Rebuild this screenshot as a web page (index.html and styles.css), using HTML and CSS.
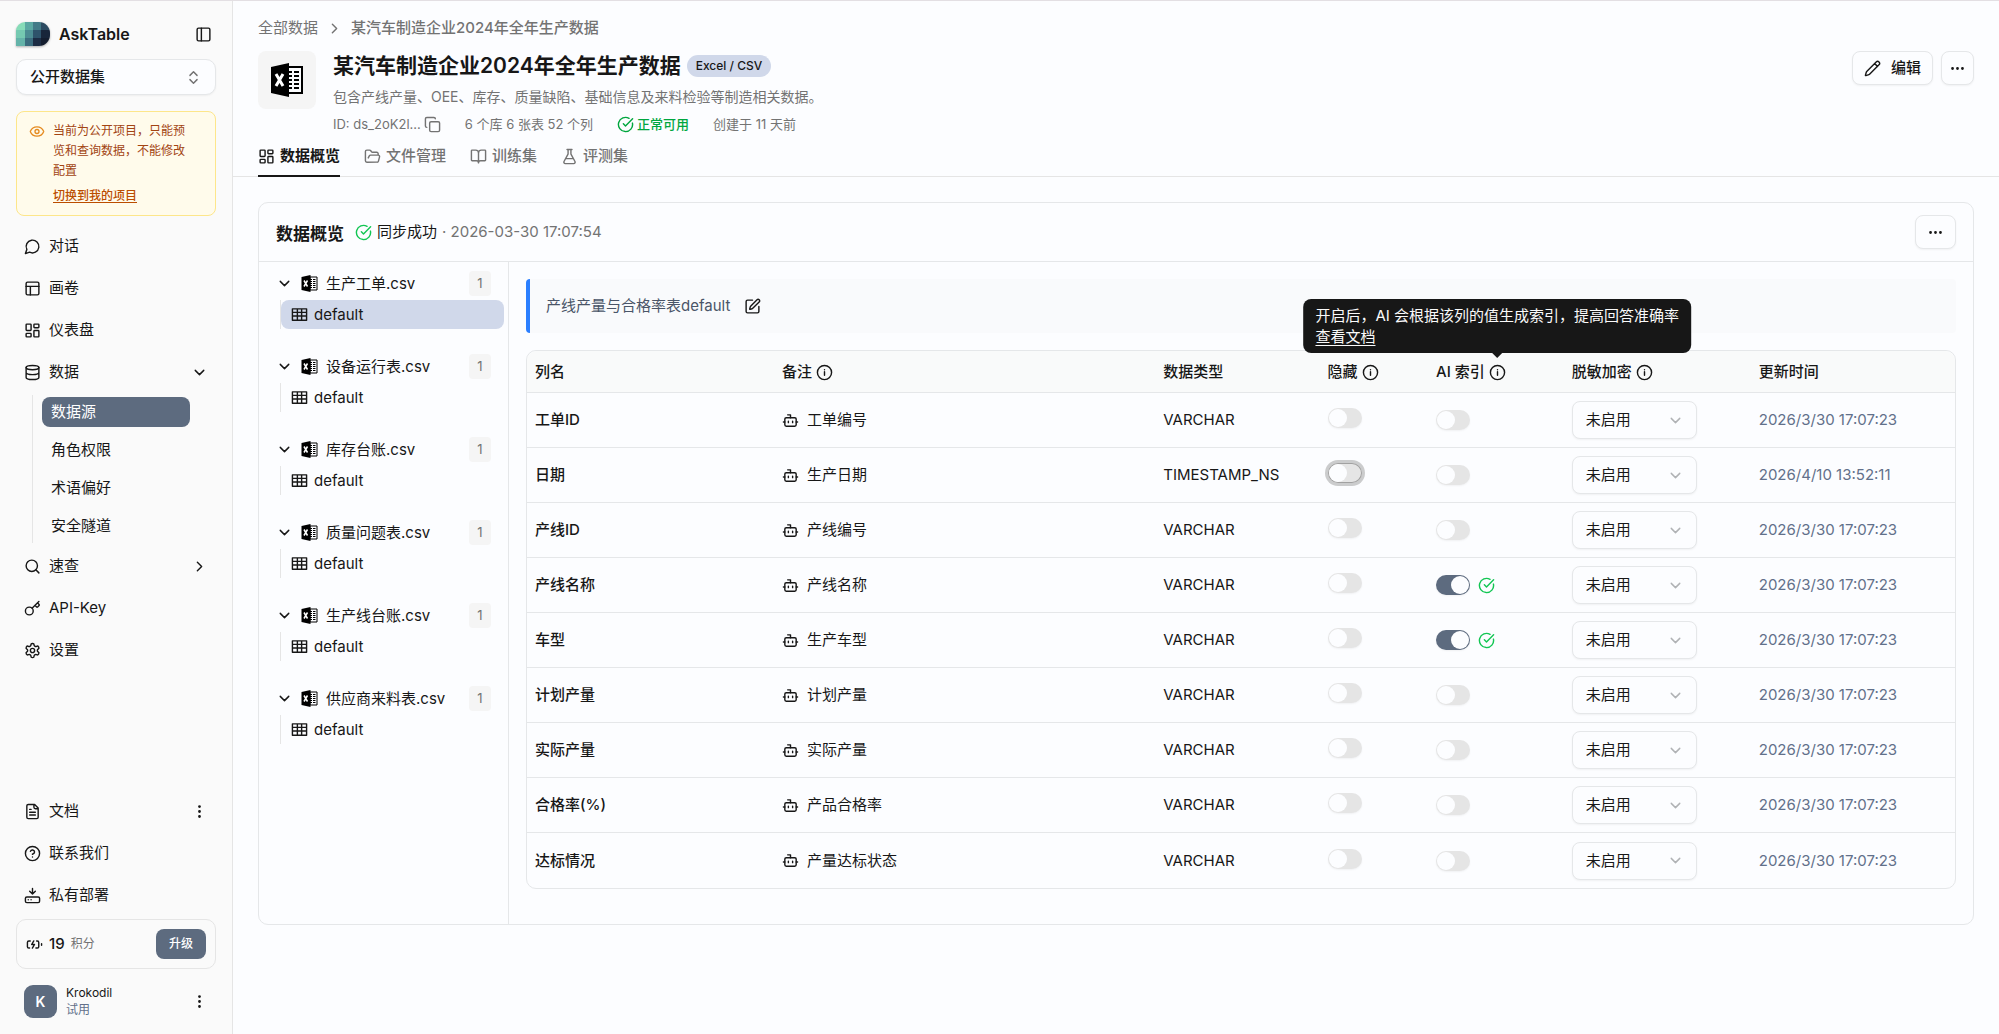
FILE: index.html
```html
<!DOCTYPE html>
<html lang="zh-CN">
<head>
  <meta charset="UTF-8" />
  <meta name="viewport" content="width=device-width, initial-scale=1.0"/>
  <title>AskTable</title>
  <link rel="stylesheet" href="styles.css">
</head>
<body>

  <!-- Icon sprite -->
  <svg class="sprite" aria-hidden="true">
    <symbol id="i-panel" viewBox="0 0 24 24"><rect x="3" y="3" width="18" height="18" rx="2"/><path d="M9 3v18"/></symbol>
    <symbol id="i-updown" viewBox="0 0 24 24"><path d="m7 15 5 5 5-5M7 9l5-5 5 5"/></symbol>
    <symbol id="i-eye" viewBox="0 0 24 24"><path d="M2.06 12.35a1 1 0 0 1 0-.7 10.75 10.75 0 0 1 19.88 0 1 1 0 0 1 0 .7 10.75 10.75 0 0 1-19.88 0"/><circle cx="12" cy="12" r="3"/></symbol>
    <symbol id="i-chat" viewBox="0 0 24 24"><path d="M7.9 20A9 9 0 1 0 4 16.1L2 22Z"/></symbol>
    <symbol id="i-canvas" viewBox="0 0 24 24"><rect x="3" y="3" width="18" height="18" rx="2"/><path d="M3 9h18M9 21V9"/></symbol>
    <symbol id="i-dashboard" viewBox="0 0 24 24"><rect x="3" y="3" width="7" height="9" rx="1"/><rect x="14" y="3" width="7" height="5" rx="1"/><rect x="14" y="12" width="7" height="9" rx="1"/><rect x="3" y="16" width="7" height="5" rx="1"/></symbol>
    <symbol id="i-database" viewBox="0 0 24 24"><ellipse cx="12" cy="5" rx="9" ry="3"/><path d="M3 5v14a9 3 0 0 0 18 0V5M3 12a9 3 0 0 0 18 0"/></symbol>
    <symbol id="i-down" viewBox="0 0 24 24"><path d="m6 9 6 6 6-6"/></symbol>
    <symbol id="i-right" viewBox="0 0 24 24"><path d="m9 18 6-6-6-6"/></symbol>
    <symbol id="i-search" viewBox="0 0 24 24"><circle cx="11" cy="11" r="8"/><path d="m21 21-4.3-4.3"/></symbol>
    <symbol id="i-key" viewBox="0 0 24 24"><path d="m15.5 7.5 2.3 2.3a1 1 0 0 0 1.4 0l2.1-2.1a1 1 0 0 0 0-1.4L19 4M21 2l-9.6 9.6"/><circle cx="7.5" cy="15.5" r="5.5"/></symbol>
    <symbol id="i-settings" viewBox="0 0 24 24"><path d="M12.22 2h-.44a2 2 0 0 0-2 2v.18a2 2 0 0 1-1 1.73l-.43.25a2 2 0 0 1-2 0l-.15-.08a2 2 0 0 0-2.73.73l-.22.38a2 2 0 0 0 .73 2.73l.15.1a2 2 0 0 1 1 1.72v.51a2 2 0 0 1-1 1.74l-.15.09a2 2 0 0 0-.73 2.73l.22.38a2 2 0 0 0 2.73.73l.15-.08a2 2 0 0 1 2 0l.43.25a2 2 0 0 1 1 1.73V20a2 2 0 0 0 2 2h.44a2 2 0 0 0 2-2v-.18a2 2 0 0 1 1-1.73l.43-.25a2 2 0 0 1 2 0l.15.08a2 2 0 0 0 2.73-.73l.22-.39a2 2 0 0 0-.73-2.73l-.15-.08a2 2 0 0 1-1-1.74v-.5a2 2 0 0 1 1-1.74l.15-.09a2 2 0 0 0 .73-2.73l-.22-.38a2 2 0 0 0-2.73-.73l-.15.08a2 2 0 0 1-2 0l-.43-.25a2 2 0 0 1-1-1.73V4a2 2 0 0 0-2-2z"/><circle cx="12" cy="12" r="3"/></symbol>
    <symbol id="i-file" viewBox="0 0 24 24"><path d="M15 2H6a2 2 0 0 0-2 2v16a2 2 0 0 0 2 2h12a2 2 0 0 0 2-2V7ZM14 2v4a2 2 0 0 0 2 2h4M10 9H8M16 13H8M16 17H8"/></symbol>
    <symbol id="i-help" viewBox="0 0 24 24"><circle cx="12" cy="12" r="10"/><path d="M9.09 9a3 3 0 0 1 5.83 1c0 2-3 3-3 3M12 17h.01"/></symbol>
    <symbol id="i-deploy" viewBox="0 0 24 24"><path d="M12 2v8M16 6l-4 4-4-4M6 18h.01M10 18h.01"/><rect x="2" y="14" width="20" height="8" rx="2"/></symbol>
    <symbol id="i-battery" viewBox="0 0 24 24"><path d="M15 7h1a2 2 0 0 1 2 2v6a2 2 0 0 1-2 2h-2M6 7H4a2 2 0 0 0-2 2v6a2 2 0 0 0 2 2h1M11 7l-3 5h4l-3 5M22 11v2"/></symbol>
    <symbol id="i-more-v" viewBox="0 0 24 24"><circle cx="12" cy="5" r="1"/><circle cx="12" cy="12" r="1"/><circle cx="12" cy="19" r="1"/></symbol>
    <symbol id="i-more-h" viewBox="0 0 24 24"><circle cx="5" cy="12" r="1"/><circle cx="12" cy="12" r="1"/><circle cx="19" cy="12" r="1"/></symbol>
    <symbol id="i-copy" viewBox="0 0 24 24"><rect x="8" y="8" width="14" height="14" rx="2"/><path d="M4 16c-1.1 0-2-.9-2-2V4c0-1.1.9-2 2-2h10c1.1 0 2 .9 2 2"/></symbol>
    <symbol id="i-check" viewBox="0 0 24 24"><path d="M21.8 10A10 10 0 1 1 17 3.34M9 11l3 3L22 4"/></symbol>
    <symbol id="i-folder" viewBox="0 0 24 24"><path d="m6 14 1.5-2.9A2 2 0 0 1 9.24 10H20a2 2 0 0 1 1.94 2.5l-1.54 6a2 2 0 0 1-1.95 1.5H4a2 2 0 0 1-2-2V5a2 2 0 0 1 2-2h3.9a2 2 0 0 1 1.69.9l.81 1.2a2 2 0 0 0 1.67.9H18a2 2 0 0 1 2 2v2"/></symbol>
    <symbol id="i-book" viewBox="0 0 24 24"><path d="M12 7v14M3 18a1 1 0 0 1-1-1V4a1 1 0 0 1 1-1h5a4 4 0 0 1 4 4 4 4 0 0 1 4-4h5a1 1 0 0 1 1 1v13a1 1 0 0 1-1 1h-6a3 3 0 0 0-3 3 3 3 0 0 0-3-3z"/></symbol>
    <symbol id="i-flask" viewBox="0 0 24 24"><path d="M14 2v6a2 2 0 0 0 .25.96l5.5 10.08A2 2 0 0 1 18 22H6a2 2 0 0 1-1.76-2.96l5.51-10.08A2 2 0 0 0 10 8V2M6.45 15h11.1M8.5 2h7"/></symbol>
    <symbol id="i-pencil" viewBox="0 0 24 24"><path d="M21.17 6.81a1 1 0 0 0-3.98-3.98L3.84 16.17a2 2 0 0 0-.5.83l-1.32 4.36a.5.5 0 0 0 .62.62l4.36-1.32a2 2 0 0 0 .83-.5zM15 5l4 4"/></symbol>
    <symbol id="i-edit" viewBox="0 0 24 24"><path d="M12 3H5a2 2 0 0 0-2 2v14a2 2 0 0 0 2 2h14a2 2 0 0 0 2-2v-7M18.38 2.63a1 1 0 0 1 3 3l-9.02 9.01a2 2 0 0 1-.85.5l-2.87.84a.5.5 0 0 1-.62-.62l.84-2.87a2 2 0 0 1 .5-.85z"/></symbol>
    <symbol id="i-bot" viewBox="0 0 24 24"><path d="M12 8V4H8M2 14h2M20 14h2M15 13v2M9 13v2"/><rect x="4" y="8" width="16" height="12" rx="2"/></symbol>
    <symbol id="i-info" viewBox="0 0 24 24"><circle cx="12" cy="12" r="10"/><path d="M12 16v-5M12 8h.01"/></symbol>
    <symbol id="i-table" viewBox="0 0 24 24"><path d="M2 4h20v16H2zM2 9h20M2 14h20M9 4v16M15 4v16"/></symbol>
    <symbol id="i-excel" viewBox="0 0 34 34">
      <path d="M18 4h14v26H18z" fill="#fcfdff" stroke="#000" stroke-width="2"/>
      <path d="M18 9h4M24 9h5M18 13h4M24 13h5M18 17h4M24 17h5M18 21h4M24 21h5M18 25h4M24 25h5" stroke="#000" stroke-width="2"/>
      <path d="M1 4 19 0v34L1 30z" fill="#000" stroke="none"/>
      <path d="m6 11 7 12M13 11 6 23" stroke="#fff" stroke-width="3" stroke-linecap="butt"/>
    </symbol>
  </svg>

  <aside class="sidebar">
    <div class="brand">
      <svg class="logo" viewBox="0 0 34 24">
        <clipPath id="logoShape"><path d="M9 0h14a11 11 0 0 1 11 11v2a11 11 0 0 1-11 11H0V9a9 9 0 0 1 9-9z"/></clipPath>
        <g clip-path="url(#logoShape)">
          <path fill="#86dcb8" d="M0 0h9v8H0z"/><path fill="#5aa8a2" d="M9 0h8v8H9z"/><path fill="#427a87" d="M17 0h8v8h-8z"/><path fill="#2c4b62" d="M25 0h9v8h-9z"/>
          <path fill="#75c9b1" d="M0 8h9v8H0z"/><path fill="#4b8c92" d="M9 8h8v8H9z"/><path fill="#2e536b" d="M17 8h8v8h-8z"/><path fill="#18253a" d="M25 8h9v8h-9z"/>
          <path fill="#64b3a9" d="M0 16h9v8H0z"/><path fill="#3b6c7e" d="M9 16h8v8H9z"/><path fill="#1c2c44" d="M17 16h8v8h-8z"/><path fill="#141d2f" d="M25 16h9v8h-9z"/>
        </g>
      </svg>
      <strong>AskTable</strong>
      <button class="icon-btn" aria-label="收起侧边栏"><svg class="icon"><use href="#i-panel"/></svg></button>
    </div>

    <button class="project">公开数据集<svg class="icon"><use href="#i-updown"/></svg></button>

    <div class="notice">
      <svg class="icon"><use href="#i-eye"/></svg>
      <div>
        <p>当前为公开项目，只能预览和查询数据，不能修改配置</p>
        <a href="#">切换到我的项目</a>
      </div>
    </div>

    <nav class="nav">
      <a href="#"><svg class="icon"><use href="#i-chat"/></svg>对话</a>
      <a href="#"><svg class="icon"><use href="#i-canvas"/></svg>画卷</a>
      <a href="#"><svg class="icon"><use href="#i-dashboard"/></svg>仪表盘</a>
      <a href="#"><svg class="icon"><use href="#i-database"/></svg>数据<svg class="icon end"><use href="#i-down"/></svg></a>
      <div class="subnav">
        <a href="#" class="active">数据源</a>
        <a href="#">角色权限</a>
        <a href="#">术语偏好</a>
        <a href="#">安全隧道</a>
      </div>
      <a href="#"><svg class="icon"><use href="#i-search"/></svg>速查<svg class="icon end"><use href="#i-right"/></svg></a>
      <a href="#"><svg class="icon"><use href="#i-key"/></svg>API-Key</a>
      <a href="#"><svg class="icon"><use href="#i-settings"/></svg>设置</a>
    </nav>

    <nav class="nav nav-bottom">
      <a href="#"><svg class="icon"><use href="#i-file"/></svg>文档<svg class="icon end"><use href="#i-more-v"/></svg></a>
      <a href="#"><svg class="icon"><use href="#i-help"/></svg>联系我们</a>
      <a href="#"><svg class="icon"><use href="#i-deploy"/></svg>私有部署</a>
    </nav>

    <div class="credits">
      <svg class="icon"><use href="#i-battery"/></svg>
      <b>19</b>
      <span>积分</span>
      <button>升级</button>
    </div>

    <div class="user">
      <span class="avatar">K</span>
      <div>
        <p>Krokodil</p>
        <small>试用</small>
      </div>
      <button class="icon-btn" aria-label="更多"><svg class="icon"><use href="#i-more-v"/></svg></button>
    </div>
  </aside>

  <main class="main">
    <header class="header">
      <div class="breadcrumb">
        <a href="#">全部数据</a>
        <svg class="icon"><use href="#i-right"/></svg>
        <span>某汽车制造企业2024年全年生产数据</span>
      </div>

      <div class="source">
        <div class="source-icon"><svg><use href="#i-excel"/></svg></div>
        <div class="source-info">
          <div class="source-title">
            <h1>某汽车制造企业2024年全年生产数据</h1>
            <span class="tag">Excel / CSV</span>
          </div>
          <p class="desc">包含产线产量、OEE、库存、质量缺陷、基础信息及来料检验等制造相关数据。</p>
          <div class="meta">
            <span class="meta-id">ID: ds_2oK2l...<svg class="icon"><use href="#i-copy"/></svg></span>
            <span>6 个库 6 张表 52 个列</span>
            <span class="ok"><svg class="icon"><use href="#i-check"/></svg>正常可用</span>
            <span>创建于 11 天前</span>
          </div>
        </div>
        <div class="actions">
          <button class="btn"><svg class="icon"><use href="#i-pencil"/></svg>编辑</button>
          <button class="btn btn-square" aria-label="更多"><svg class="icon"><use href="#i-more-h"/></svg></button>
        </div>
      </div>

      <nav class="tabs">
        <a href="#" class="active"><svg class="icon"><use href="#i-dashboard"/></svg>数据概览</a>
        <a href="#"><svg class="icon"><use href="#i-folder"/></svg>文件管理</a>
        <a href="#"><svg class="icon"><use href="#i-book"/></svg>训练集</a>
        <a href="#"><svg class="icon"><use href="#i-flask"/></svg>评测集</a>
      </nav>
    </header>

    <section class="panel">
      <div class="panel-header">
        <div class="panel-title">
          <h2>数据概览</h2>
          <span class="sync"><svg class="icon green"><use href="#i-check"/></svg>同步成功 <span class="muted">· 2026-03-30 17:07:54</span></span>
        </div>
        <button class="btn btn-wide" aria-label="更多"><svg class="icon"><use href="#i-more-h"/></svg></button>
      </div>

      <div class="panel-body">
        <ul class="tree">
          <li>
            <div class="file"><svg class="icon"><use href="#i-down"/></svg><svg class="xls"><use href="#i-excel"/></svg>生产工单.csv<span class="count">1</span></div>
            <div class="children"><a href="#" class="active"><svg class="icon"><use href="#i-table"/></svg>default</a></div>
          </li>
          <li>
            <div class="file"><svg class="icon"><use href="#i-down"/></svg><svg class="xls"><use href="#i-excel"/></svg>设备运行表.csv<span class="count">1</span></div>
            <div class="children"><a href="#"><svg class="icon"><use href="#i-table"/></svg>default</a></div>
          </li>
          <li>
            <div class="file"><svg class="icon"><use href="#i-down"/></svg><svg class="xls"><use href="#i-excel"/></svg>库存台账.csv<span class="count">1</span></div>
            <div class="children"><a href="#"><svg class="icon"><use href="#i-table"/></svg>default</a></div>
          </li>
          <li>
            <div class="file"><svg class="icon"><use href="#i-down"/></svg><svg class="xls"><use href="#i-excel"/></svg>质量问题表.csv<span class="count">1</span></div>
            <div class="children"><a href="#"><svg class="icon"><use href="#i-table"/></svg>default</a></div>
          </li>
          <li>
            <div class="file"><svg class="icon"><use href="#i-down"/></svg><svg class="xls"><use href="#i-excel"/></svg>生产线台账.csv<span class="count">1</span></div>
            <div class="children"><a href="#"><svg class="icon"><use href="#i-table"/></svg>default</a></div>
          </li>
          <li>
            <div class="file"><svg class="icon"><use href="#i-down"/></svg><svg class="xls"><use href="#i-excel"/></svg>供应商来料表.csv<span class="count">1</span></div>
            <div class="children"><a href="#"><svg class="icon"><use href="#i-table"/></svg>default</a></div>
          </li>
        </ul>

        <div class="content">
          <div class="remark">
            产线产量与合格率表default
            <button class="icon-btn" aria-label="编辑备注"><svg class="icon"><use href="#i-edit"/></svg></button>
          </div>

          <table class="columns">
            <thead>
              <tr>
                <th class="c-name">列名</th>
                <th class="c-note">备注 <span class="info"><svg class="icon"><use href="#i-info"/></svg></span></th>
                <th class="c-type">数据类型</th>
                <th class="c-hide">隐藏 <span class="info"><svg class="icon"><use href="#i-info"/></svg></span></th>
                <th class="c-index">AI 索引 <span class="info"><svg class="icon"><use href="#i-info"/></svg><span class="tooltip" role="tooltip">开启后，AI 会根据该列的值生成索引，提高回答准确率<br><a href="#">查看文档</a></span></span></th>
                <th class="c-mask">脱敏加密 <span class="info"><svg class="icon"><use href="#i-info"/></svg></span></th>
                <th class="c-time">更新时间</th>
              </tr>
            </thead>
            <tbody>
              <tr>
                <td class="name">工单ID</td>
                <td><span class="cell"><svg class="icon"><use href="#i-bot"/></svg>工单编号</span></td>
                <td>VARCHAR</td>
                <td class="hide"><input type="checkbox" class="switch" aria-label="隐藏 工单ID"></td>
                <td><span class="cell"><input type="checkbox" class="switch" aria-label="AI 索引 工单ID"></span></td>
                <td><span class="select"><select aria-label="脱敏加密 工单ID"><option>未启用</option></select><svg class="icon"><use href="#i-down"/></svg></span></td>
                <td class="time">2026/3/30 17:07:23</td>
              </tr>
              <tr>
                <td class="name">日期</td>
                <td><span class="cell"><svg class="icon"><use href="#i-bot"/></svg>生产日期</span></td>
                <td>TIMESTAMP_NS</td>
                <td class="hide"><input type="checkbox" class="switch focused" aria-label="隐藏 日期"></td>
                <td><span class="cell"><input type="checkbox" class="switch" aria-label="AI 索引 日期"></span></td>
                <td><span class="select"><select aria-label="脱敏加密 日期"><option>未启用</option></select><svg class="icon"><use href="#i-down"/></svg></span></td>
                <td class="time">2026/4/10 13:52:11</td>
              </tr>
              <tr>
                <td class="name">产线ID</td>
                <td><span class="cell"><svg class="icon"><use href="#i-bot"/></svg>产线编号</span></td>
                <td>VARCHAR</td>
                <td class="hide"><input type="checkbox" class="switch" aria-label="隐藏 产线ID"></td>
                <td><span class="cell"><input type="checkbox" class="switch" aria-label="AI 索引 产线ID"></span></td>
                <td><span class="select"><select aria-label="脱敏加密 产线ID"><option>未启用</option></select><svg class="icon"><use href="#i-down"/></svg></span></td>
                <td class="time">2026/3/30 17:07:23</td>
              </tr>
              <tr>
                <td class="name">产线名称</td>
                <td><span class="cell"><svg class="icon"><use href="#i-bot"/></svg>产线名称</span></td>
                <td>VARCHAR</td>
                <td class="hide"><input type="checkbox" class="switch" aria-label="隐藏 产线名称"></td>
                <td><span class="cell"><input type="checkbox" class="switch" aria-label="AI 索引 产线名称" checked><svg class="icon green"><use href="#i-check"/></svg></span></td>
                <td><span class="select"><select aria-label="脱敏加密 产线名称"><option>未启用</option></select><svg class="icon"><use href="#i-down"/></svg></span></td>
                <td class="time">2026/3/30 17:07:23</td>
              </tr>
              <tr>
                <td class="name">车型</td>
                <td><span class="cell"><svg class="icon"><use href="#i-bot"/></svg>生产车型</span></td>
                <td>VARCHAR</td>
                <td class="hide"><input type="checkbox" class="switch" aria-label="隐藏 车型"></td>
                <td><span class="cell"><input type="checkbox" class="switch" aria-label="AI 索引 车型" checked><svg class="icon green"><use href="#i-check"/></svg></span></td>
                <td><span class="select"><select aria-label="脱敏加密 车型"><option>未启用</option></select><svg class="icon"><use href="#i-down"/></svg></span></td>
                <td class="time">2026/3/30 17:07:23</td>
              </tr>
              <tr>
                <td class="name">计划产量</td>
                <td><span class="cell"><svg class="icon"><use href="#i-bot"/></svg>计划产量</span></td>
                <td>VARCHAR</td>
                <td class="hide"><input type="checkbox" class="switch" aria-label="隐藏 计划产量"></td>
                <td><span class="cell"><input type="checkbox" class="switch" aria-label="AI 索引 计划产量"></span></td>
                <td><span class="select"><select aria-label="脱敏加密 计划产量"><option>未启用</option></select><svg class="icon"><use href="#i-down"/></svg></span></td>
                <td class="time">2026/3/30 17:07:23</td>
              </tr>
              <tr>
                <td class="name">实际产量</td>
                <td><span class="cell"><svg class="icon"><use href="#i-bot"/></svg>实际产量</span></td>
                <td>VARCHAR</td>
                <td class="hide"><input type="checkbox" class="switch" aria-label="隐藏 实际产量"></td>
                <td><span class="cell"><input type="checkbox" class="switch" aria-label="AI 索引 实际产量"></span></td>
                <td><span class="select"><select aria-label="脱敏加密 实际产量"><option>未启用</option></select><svg class="icon"><use href="#i-down"/></svg></span></td>
                <td class="time">2026/3/30 17:07:23</td>
              </tr>
              <tr>
                <td class="name">合格率(%)</td>
                <td><span class="cell"><svg class="icon"><use href="#i-bot"/></svg>产品合格率</span></td>
                <td>VARCHAR</td>
                <td class="hide"><input type="checkbox" class="switch" aria-label="隐藏 合格率"></td>
                <td><span class="cell"><input type="checkbox" class="switch" aria-label="AI 索引 合格率"></span></td>
                <td><span class="select"><select aria-label="脱敏加密 合格率"><option>未启用</option></select><svg class="icon"><use href="#i-down"/></svg></span></td>
                <td class="time">2026/3/30 17:07:23</td>
              </tr>
              <tr>
                <td class="name">达标情况</td>
                <td><span class="cell"><svg class="icon"><use href="#i-bot"/></svg>产量达标状态</span></td>
                <td>VARCHAR</td>
                <td class="hide"><input type="checkbox" class="switch" aria-label="隐藏 达标情况"></td>
                <td><span class="cell"><input type="checkbox" class="switch" aria-label="AI 索引 达标情况"></span></td>
                <td><span class="select"><select aria-label="脱敏加密 达标情况"><option>未启用</option></select><svg class="icon"><use href="#i-down"/></svg></span></td>
                <td class="time">2026/3/30 17:07:23</td>
              </tr>
            </tbody>
          </table>
        </div>
      </div>
    </section>
  </main>

</body>
</html>
```
FILE: styles.css
```css
* {
  box-sizing: border-box;
}
body {
  margin: 0;
  min-height: 100vh;
  display: flex;
  border-top: 1px solid #e3dfe3;
  background: #fcfdff;
  color: #171717;
  font-family: Inter, "Noto Sans CJK SC", sans-serif;
  font-size: 15px;
  line-height: 22px;
}
h1, h2, p, ul {
  margin: 0;
  padding: 0;
}
a {
  color: inherit;
  text-decoration: none;
}
button, select {
  font: inherit;
  color: inherit;
  cursor: pointer;
}
.sprite {
  display: none;
}
.icon {
  width: 17px;
  height: 17px;
  flex: none;
  fill: none;
  stroke: currentColor;
  stroke-width: 2;
  stroke-linecap: round;
  stroke-linejoin: round;
}
.green {
  color: #12c653;
}
.muted {
  color: #737373;
}
.icon-btn {
  display: flex;
  padding: 0;
  border: none;
  background: none;
}

/* Sidebar */
.sidebar {
  width: 233px;
  flex: none;
  display: flex;
  flex-direction: column;
  padding: 16px;
  border-right: 1px solid #e5e5e5;
  background: #fafafa;
}
.brand {
  display: flex;
  align-items: center;
  height: 34px;
}
.brand strong {
  margin-left: 9px;
  font-size: 16px;
  font-weight: 600;
}
.brand .icon-btn {
  margin-left: auto;
  margin-right: 4px;
}
.logo {
  width: 34px;
  height: 24px;
  filter: drop-shadow(0 1px 1px rgba(0,0,0,0.3));
}
.project {
  display: flex;
  align-items: center;
  justify-content: space-between;
  height: 36px;
  margin-top: 8px;
  padding: 0 13px;
  border: 1px solid #e5e7e9;
  border-radius: 10px;
  background: #fcfdff;
  box-shadow: 0 1px 2px rgba(0,0,0,0.05);
  font-weight: 500;
}
.project .icon {
  color: #737373;
}
.notice {
  display: flex;
  gap: 8px;
  margin-top: 16px;
  padding: 9px 22px 9px 12px;
  border: 1px solid #fde68a;
  border-radius: 8px;
  background: #fffbeb;
  color: #a24412;
  font-size: 12px;
  line-height: 20px;
}
.notice .icon {
  width: 16px;
  margin-top: 2px;
  color: #e58a1f;
}
.notice a {
  display: inline-block;
  margin-top: 5px;
  color: #bb4d00;
  font-weight: 500;
  text-decoration: underline;
  text-underline-offset: 2px;
}
.nav {
  display: flex;
  flex-direction: column;
  margin-top: 9px;
}
.nav > a {
  display: flex;
  align-items: center;
  gap: 8px;
  height: 42px;
  padding: 0 8px;
}
.nav .end {
  margin-left: auto;
}
.subnav {
  display: flex;
  flex-direction: column;
  gap: 8px;
  margin: 2px 26px 2px 16px;
  padding: 2px 0 2px 9px;
  border-left: 1px solid #e5e5e5;
}
.subnav a {
  padding: 4px 9px;
  border-radius: 8px;
}
.subnav .active {
  background: #5d6b7f;
  color: #fff;
}
.nav-bottom {
  margin-top: auto;
}
.credits {
  display: flex;
  align-items: center;
  margin-top: 3px;
  padding: 9px;
  border: 1px solid #e5e5e5;
  border-radius: 10px;
}
.credits b {
  margin: 0 6px;
  font-weight: 500;
}
.credits span {
  color: #737373;
  font-size: 12px;
}
.credits button {
  margin-left: auto;
  padding: 4px 13px;
  border: none;
  border-radius: 8px;
  background: #5d6b7f;
  color: #fff;
  font-size: 12px;
  font-weight: 500;
}
.user {
  display: flex;
  align-items: center;
  gap: 9px;
  margin-top: 15px;
  padding: 0 8px;
}
.user p, .user small {
  display: block;
  font-size: 12px;
  line-height: 17px;
}
.user small {
  color: #62708a;
}
.user .icon-btn {
  margin-left: auto;
}
.avatar {
  width: 33px;
  height: 33px;
  border-radius: 9px;
  background: #5d6b7f;
  color: #fff;
  font-size: 14px;
  font-weight: 600;
  line-height: 33px;
  text-align: center;
}

/* Page header */
.main {
  flex: 1;
  min-width: 0;
}
.header {
  padding: 16px 25px 0;
  border-bottom: 1px solid #e5e5e5;
}
.breadcrumb {
  display: flex;
  align-items: center;
  gap: 8px;
  color: #737373;
}
.breadcrumb span {
  font-weight: 500;
}
.source {
  display: flex;
  margin-top: 12px;
}
.source-icon {
  width: 58px;
  height: 58px;
  padding: 12px;
  border-radius: 8px;
  background: #f5f5f5;
}
.source-icon svg {
  display: block;
  width: 34px;
  height: 34px;
}
.source-info {
  margin-left: 17px;
}
.source-title {
  display: flex;
  align-items: center;
  gap: 6px;
  height: 30px;
}
.source-title h1 {
  font-size: 21px;
  font-weight: 600;
}
.tag {
  padding: 0 9px;
  border-radius: 12px;
  background: #d0d8ea;
  font-size: 12px;
  font-weight: 500;
}
.desc {
  margin-top: 5px;
  color: #737373;
  font-size: 14px;
}
.meta {
  display: flex;
  align-items: center;
  gap: 24px;
  margin-top: 7px;
  color: #737373;
  font-size: 13px;
  line-height: 18px;
}
.meta span {
  display: flex;
  align-items: center;
  gap: 3px;
}
.meta .ok {
  color: #00a63e;
  font-weight: 500;
}
.actions {
  display: flex;
  gap: 8px;
  margin-left: auto;
}
.btn {
  display: flex;
  align-items: center;
  gap: 10px;
  height: 34px;
  padding: 0 11px;
  border: 1px solid #e5e7e9;
  border-radius: 8px;
  background: #fcfdff;
  box-shadow: 0 1px 2px rgba(0,0,0,0.05);
  font-weight: 500;
}
.btn-square {
  padding: 0 7px;
}
.tabs {
  display: flex;
  gap: 24px;
  margin-bottom: -1px;
}
.tabs a {
  display: flex;
  align-items: center;
  gap: 5px;
  padding: 12px 0 8px;
  border-bottom: 2px solid transparent;
  color: #737373;
  font-weight: 500;
}
.tabs .active {
  border-color: #171717;
  color: #171717;
  font-weight: 600;
}

/* Overview panel */
.panel {
  margin: 25px;
  border: 1px solid #e5e7e9;
  border-radius: 10px;
}
.panel-header {
  display: flex;
  align-items: center;
  justify-content: space-between;
  padding: 12px 17px;
  border-bottom: 1px solid #e5e7e9;
}
.panel-title {
  display: flex;
  gap: 11px;
}
.panel-title h2 {
  padding-top: 4px;
  font-size: 17px;
  font-weight: 600;
  line-height: 30px;
}
.sync {
  display: flex;
  align-items: center;
  gap: 5px;
}
.btn-wide {
  padding: 0 11px;
}
.panel-body {
  display: flex;
}
.tree {
  width: 250px;
  flex: none;
  padding: 9px 4px 9px 17px;
  border-right: 1px solid #e5e7e9;
  list-style: none;
}
.tree li {
  margin-bottom: 25px;
}
.file {
  display: flex;
  align-items: center;
  gap: 8px;
  height: 25px;
  padding-right: 13px;
}
.xls {
  width: 17px;
  height: 17px;
}
.count {
  width: 22px;
  margin-left: auto;
  border-radius: 4px;
  background: #f5f5f5;
  color: #737373;
  font-size: 13px;
  line-height: 25px;
  text-align: center;
}
.children {
  margin: 4px 0 0 4px;
  border-left: 1px solid #e5e5e5;
}
.children a {
  display: flex;
  align-items: center;
  gap: 6px;
  height: 29px;
  padding: 0 10px;
  border-radius: 8px;
}
.children .active {
  background: #d0d8ea;
}
.content {
  flex: 1;
  min-width: 0;
  padding: 17px 17px 35px;
}
.remark {
  display: flex;
  align-items: center;
  gap: 14px;
  padding: 16px;
  border-left: 4px solid #2b7fff;
  border-radius: 4px;
  background: #f9fafc;
  color: #4a5568;
}
.remark .icon {
  color: #171717;
}
.columns {
  width: 100%;
  margin-top: 17px;
  table-layout: fixed;
  border: 1px solid #e5e7e9;
  border-radius: 10px;
  border-spacing: 0;
}
.columns th, .columns td {
  padding: 0 8px;
  text-align: left;
  white-space: nowrap;
}
.columns th {
  height: 42px;
  border-bottom: 1px solid #e5e7e9;
  background: #f9fafa;
  font-weight: 500;
}
.columns th:first-child {
  border-top-left-radius: 10px;
}
.columns th:last-child {
  border-top-right-radius: 10px;
}
.columns td {
  height: 55px;
  border-bottom: 1px solid #e5e7e9;
}
.columns tr:last-child td {
  border-bottom: none;
}
.c-name { width: 17.3%; }
.c-note { width: 26.7%; }
.c-type { width: 11.5%; }
.c-hide { width: 7.6%; }
.c-index { width: 9.5%; }
.c-mask { width: 13.1%; }
.columns .name {
  font-weight: 500;
}
.columns .time {
  color: #62708a;
}
.cell {
  display: flex;
  align-items: center;
  gap: 8px;
}
.info {
  position: relative;
  display: inline-flex;
  vertical-align: middle;
}
.switch {
  appearance: none;
  display: block;
  width: 34px;
  height: 20px;
  margin: 0;
  padding: 1px;
  border-radius: 10px;
  background: #e5e5e5;
  box-shadow: 0 1px 2px rgba(0,0,0,0.05);
  cursor: pointer;
}
.switch::before {
  content: "";
  display: block;
  width: 18px;
  height: 18px;
  border-radius: 50%;
  background: #fcfdff;
}
.switch:checked {
  background: #5d6b7f;
}
.switch:checked::before {
  margin-left: auto;
}
.switch.focused {
  box-shadow: inset 0 0 0 1px #a1a1a1, 0 0 0 3px #cbcccd;
}
.columns .hide {
  padding-bottom: 4px;
}
.select {
  display: grid;
  align-items: center;
  width: 125px;
}
.select select {
  grid-area: 1 / 1;
  appearance: none;
  height: 38px;
  padding: 0 13px;
  border: 1px solid #e5e7e9;
  border-radius: 8px;
  background: #fcfdff;
  box-shadow: 0 1px 2px rgba(0,0,0,0.05);
}
.select .icon {
  grid-area: 1 / 1;
  justify-self: end;
  margin-right: 13px;
  color: #b0b2b5;
  pointer-events: none;
}

/* Tooltip above the info icon */
.tooltip {
  position: absolute;
  bottom: 28px;
  left: 50%;
  transform: translateX(-50%);
  padding: 6px 12px;
  border-radius: 8px;
  background: #171717;
  color: #fafafa;
  font-size: 15px;
  font-weight: 400;
  line-height: 21px;
}
.tooltip::after {
  content: "";
  position: absolute;
  top: 100%;
  left: 50%;
  margin-left: -5px;
  border: 5px solid transparent;
  border-top-color: #171717;
  border-bottom: none;
}
.tooltip a {
  text-decoration: underline;
  text-underline-offset: 3px;
}
```
